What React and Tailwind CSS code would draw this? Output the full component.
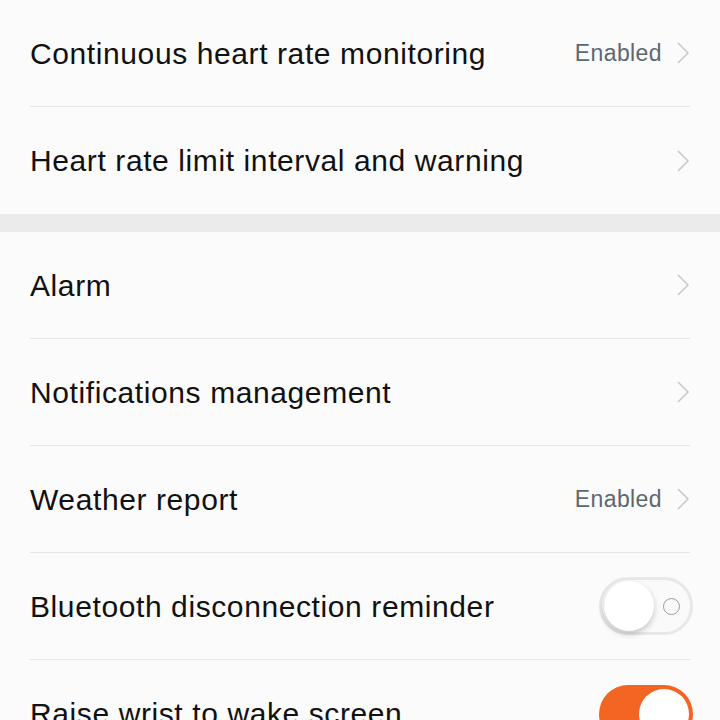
import React from "react";

function Chevron() {
  return (
    <svg width="14" height="24" viewBox="0 0 14 24" className="shrink-0">
      <path d="M2 2 L12 12 L2 22" fill="none" stroke="#c8c8c8" strokeWidth="1.6" />
    </svg>
  );
}

function Row({ label, value, right, last }) {
  return (
    <div className="pl-[30px] pr-[30px]">
      <div className={`h-[107px] flex items-center justify-between ${last ? "" : "border-b border-[#e6e6e6]"}`}>
        <span className="text-[30px] tracking-[0.6px] text-[#111] leading-none mt-[1px]">{label}</span>
        {right ? (
          right
        ) : (
          <div className="flex items-center gap-[14px]">
            {value && <span className="text-[23px] tracking-[0.4px] text-[#5c6870] leading-none">{value}</span>}
            <Chevron />
          </div>
        )}
      </div>
    </div>
  );
}

function ToggleOff() {
  return (
    <div className="relative w-[94px] h-[58px] rounded-full border-[3px] border-[#e8e8e8] bg-[#fafafa] mr-[-3px]">
      <div className="absolute left-[2px] top-[1px] w-[50px] h-[50px] rounded-full bg-white shadow-[0_3px_6px_rgba(0,0,0,0.22)]" />
      <div className="absolute left-[61px] top-[18px] w-[17px] h-[17px] rounded-full border-[1.5px] border-[#9a9a9a]" />
    </div>
  );
}

function ToggleOn() {
  return (
    <div className="relative w-[94px] h-[58px] rounded-full bg-[#f26522] mr-[-3px]">
      <div className="absolute right-[4px] top-[4px] w-[50px] h-[50px] rounded-full bg-white" />
    </div>
  );
}

export default function App() {
  return (
    <div className="w-[720px] h-[720px] overflow-hidden bg-[#fbfbfb]" style={{ fontFamily: '"Liberation Sans", Arial, sans-serif' }}>
      <div>
        <Row label="Continuous heart rate monitoring" value="Enabled" />
        <Row label="Heart rate limit interval and warning" last />
      </div>
      <div className="h-[18px] bg-[#ebebeb]" />
      <Row label="Alarm" />
      <Row label="Notifications management" />
      <Row label="Weather report" value="Enabled" />
      <Row label="Bluetooth disconnection reminder" right={<ToggleOff />} />
      <Row label="Raise wrist to wake screen" right={<ToggleOn />} last />
    </div>
  );
}
